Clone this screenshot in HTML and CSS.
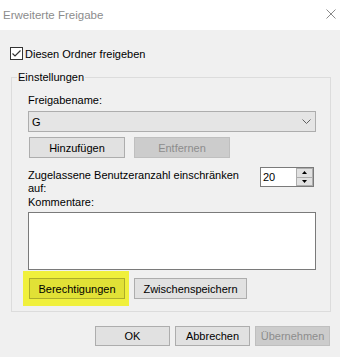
FILE: index.html
```html
<!DOCTYPE html>
<html lang="de">
<head>
    <meta charset="UTF-8">
    <meta name="viewport" content="width=device-width, initial-scale=1.0">
    <title>Erweiterte Freigabe</title>
    <link rel="stylesheet" href="styles.css">
</head>
<body>
    <div class="window">
        <div class="titlebar">
            <span class="title">Erweiterte Freigabe</span>
            <svg class="close" width="10" height="10" viewBox="0 0 10 10">
                <path d="M0.5 0.5L9.5 9.5M9.5 0.5L0.5 9.5" stroke="#8a8a8a" stroke-width="1"/>
            </svg>
        </div>

        <label class="check">
            <span class="box">
                <svg width="11" height="11" viewBox="0 0 11 11">
                    <path d="M1.5 5.5L4 8L9.5 2.5" fill="none" stroke="#333" stroke-width="1.2"/>
                </svg>
            </span>
            Diesen Ordner freigeben
        </label>

        <fieldset class="group">
            <legend>Einstellungen</legend>

            <div class="label">Freigabename:</div>
            <div class="select">
                <span>G</span>
                <svg width="9" height="5" viewBox="0 0 9 5">
                    <path d="M0.5 0.5L4.5 4.5L8.5 0.5" fill="none" stroke="#606060"/>
                </svg>
            </div>

            <div class="btn-row">
                <button class="btn">Hinzufügen</button>
                <button class="btn" disabled>Entfernen</button>
            </div>

            <div class="limit">
                <div class="limit-label">Zugelassene Benutzeranzahl einschränken<br>auf:</div>
                <div class="spin">
                    <span class="spin-value">20</span>
                    <div class="spin-btns">
                        <span class="spin-btn">
                            <svg width="5" height="3" viewBox="0 0 5 3"><path d="M2.5 0L5 3H0z" fill="#000"/></svg>
                        </span>
                        <span class="spin-btn">
                            <svg width="5" height="3" viewBox="0 0 5 3"><path d="M0 0H5L2.5 3z" fill="#000"/></svg>
                        </span>
                    </div>
                </div>
            </div>

            <div class="label">Kommentare:</div>
            <div class="textarea"></div>

            <div class="action-row">
                <span class="highlight">
                    <button class="btn btn-marked">Berechtigungen</button>
                </span>
                <button class="btn btn-wide">Zwischenspeichern</button>
            </div>
        </fieldset>

        <div class="footer">
            <button class="btn btn-small">OK</button>
            <button class="btn btn-small">Abbrechen</button>
            <button class="btn btn-small" disabled>Übernehmen</button>
        </div>
    </div>
</body>
</html>
```

FILE: styles.css
```css
* {
    box-sizing: border-box;
}
body {
    margin: 0;
    font-family: "Liberation Sans", Arial, sans-serif;
    font-size: 11px;
    color: #000;
    background-color: #f0f0f0;
}
.window {
    width: 340px;
    height: 357px;
    background-color: #f0f0f0;
    overflow: hidden;
}
.titlebar {
    height: 30px;
    background-color: #fff;
    display: flex;
    align-items: center;
    justify-content: space-between;
    padding: 0 4px 0 3px;
}
.title {
    color: #8c8c8c;
    font-size: 11.5px;
}
.close {
    margin-bottom: 2px;
}
.check {
    display: flex;
    align-items: center;
    height: 15px;
    margin: 16px 0 0 10px;
}
.box {
    width: 13px;
    height: 13px;
    border: 1px solid #333;
    background-color: #fff;
    margin-right: 2px;
    display: flex;
}
.group {
    margin: 9px 9px 0 11px;
    padding: 8px 14px 5px 16px;
    border: 1px solid #dcdcdc;
    min-width: 0;
}
.group legend {
    margin-left: -11px;
    padding: 0 1px;
    line-height: 15px;
}
.label {
    line-height: 15px;
}
.select {
    margin-top: 3px;
    height: 21px;
    border: 1px solid #adadad;
    background-color: #e5e5e5;
    display: flex;
    align-items: center;
    justify-content: space-between;
    padding: 0 4px 0 3px;
}
.btn-row {
    display: flex;
    gap: 9px;
    margin-top: 5px;
    padding-left: 1px;
}
.btn {
    width: 96px;
    height: 21px;
    padding: 0;
    border: 1px solid #adadad;
    background-color: #e1e1e1;
    font: inherit;
    color: #000;
}
.btn:disabled {
    background-color: #cccccc;
    border-color: #bfbfbf;
    color: #8c8c8c;
}
.limit {
    display: flex;
    justify-content: space-between;
    margin-top: 9px;
}
.limit-label {
    padding-top: 2px;
    line-height: 13px;
}
.spin {
    display: flex;
    width: 54px;
    height: 20px;
    margin-right: 2px;
    border: 1px solid #7a7a7a;
    background-color: #fff;
}
.spin-value {
    flex: 1;
    padding-left: 2px;
    line-height: 18px;
}
.spin-btns {
    width: 17px;
    display: flex;
    flex-direction: column;
}
.spin-btn {
    flex: 1;
    display: flex;
    align-items: center;
    justify-content: center;
    border: 1px solid #adadad;
    background-color: #e1e1e1;
}
.spin-btn + .spin-btn {
    border-top: none;
}
.textarea {
    margin-top: 2px;
    height: 58px;
    border: 1px solid #7a7a7a;
    background-color: #fff;
}
.action-row {
    display: flex;
    align-items: center;
    gap: 5px;
    margin-top: 1px;
    margin-left: -5px;
}
.highlight {
    display: flex;
    padding: 7px 4px 7px 6px;
    background-color: #f0f03c;
}
.btn-marked {
    background-color: #e1e136;
    border-color: #adad2a;
}
.btn-wide {
    width: 113px;
}
.footer {
    display: flex;
    justify-content: flex-end;
    gap: 5px;
    margin-top: 14px;
    padding-right: 10px;
}
.btn-small {
    width: 75px;
    height: 20px;
}
```
